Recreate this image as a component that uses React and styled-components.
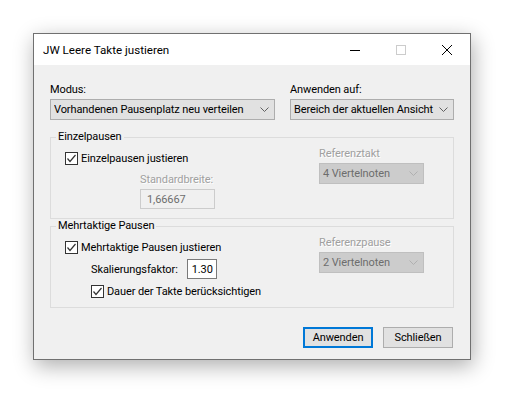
import styled, { createGlobalStyle } from "styled-components";

const GlobalStyle = createGlobalStyle`
  html, body {
    margin: 0;
    background: #ffffff;
  }
  body {
    font-family: Roboto, "Noto Sans", sans-serif;
    font-size: 11px;
    letter-spacing: -0.1px;
    color: #000;
  }
`;

const Page = styled.div`
  width: 524px;
  height: 399px;
  padding: 33px 0 0 33px;
  box-sizing: border-box;
  background: #fff;
`;

const Window = styled.div`
  width: 438px;
  box-sizing: border-box;
  border: 1px solid #707070;
  background: #f0f0f0;
  box-shadow: 2px 6px 20px rgba(0, 0, 0, 0.32);
`;

const TitleBar = styled.div`
  height: 31px;
  background: #fff;
  display: flex;
  align-items: center;
`;

const Title = styled.div`
  flex: 1;
  padding-left: 9px;
  font-size: 11.6px;
  letter-spacing: 0;
  line-height: 16px;
`;

const CaptionButton = styled.div`
  width: 46px;
  height: 31px;
  display: flex;
  align-items: center;
  justify-content: center;
`;

const Body = styled.div`
  padding: 18px 16px 11px 16px;
`;

const TopRow = styled.div`
  display: flex;
  gap: 15px;
`;

const Column = styled.div`
  display: flex;
  flex-direction: column;
  width: ${(p) => p.$w}px;
`;

const Label = styled.div`
  line-height: 14px;
  height: 14px;
  margin-bottom: 2px;
  white-space: nowrap;
  color: ${(p) => (p.$disabled ? "#a0a0a0" : "#000")};
  text-shadow: ${(p) => (p.$disabled ? "1px 1px 0 #fff" : "none")};
`;

const Combo = styled.div`
  height: 21px;
  box-sizing: border-box;
  border: 1px solid ${(p) => (p.$disabled ? "#bfbfbf" : "#adadad")};
  background: ${(p) => (p.$disabled ? "#cccccc" : "#e1e1e1")};
  color: ${(p) => (p.$disabled ? "#6d6d6d" : "#000")};
  display: flex;
  align-items: center;
  gap: 2px;
  padding: 0 5px 0 3px;
  white-space: nowrap;
  span {
    flex: 1;
    overflow: hidden;
  }
  svg {
    flex-shrink: 0;
  }
`;

const Group = styled.div`
  position: relative;
  height: 82px;
  box-sizing: border-box;
  border: 1px solid #dcdcdc;
  margin-top: ${(p) => p.$top}px;
  padding: 9px 29px 0 14px;
  display: flex;
  justify-content: space-between;
`;

const Legend = styled.div`
  position: absolute;
  top: -8px;
  left: 5px;
  padding: 0 2px;
  background: #f0f0f0;
  line-height: 14px;
`;

const LeftCol = styled.div`
  display: flex;
  flex-direction: column;
  padding-top: 5px;
`;

const CheckRow = styled.label`
  display: flex;
  align-items: center;
  gap: 3px;
  height: 13px;
  line-height: 13px;
  margin-left: ${(p) => p.$indent || 0}px;
  margin-top: ${(p) => p.$top || 0}px;
  white-space: nowrap;
`;

const Box = styled.span`
  width: 13px;
  height: 13px;
  box-sizing: border-box;
  border: 1px solid #333;
  background: #fff;
  display: flex;
  align-items: center;
  justify-content: center;
`;

const SubBlock = styled.div`
  margin-left: ${(p) => p.$indent}px;
  margin-top: ${(p) => p.$top}px;
  display: flex;
  flex-direction: ${(p) => (p.$row ? "row" : "column")};
  align-items: ${(p) => (p.$row ? "center" : "stretch")};
  gap: ${(p) => (p.$row ? "9px" : "0")};
`;

const Field = styled.div`
  width: ${(p) => p.$w}px;
  height: 20px;
  box-sizing: border-box;
  border: 1px solid ${(p) => (p.$disabled ? "#cccccc" : "#7a7a7a")};
  background: ${(p) => (p.$disabled ? "#f0f0f0" : "#fff")};
  color: ${(p) => (p.$disabled ? "#6d6d6d" : "#000")};
  display: flex;
  align-items: center;
  justify-content: ${(p) => (p.$right ? "flex-end" : "flex-start")};
  padding: 0 3px 0 6px;
`;

const Footer = styled.div`
  display: flex;
  justify-content: flex-end;
  gap: 10px;
  margin-top: 19px;
  padding-right: 1px;
`;

const Button = styled.div`
  width: 70px;
  height: 21px;
  box-sizing: border-box;
  border: ${(p) => (p.$default ? "2px solid #0078d7" : "1px solid #adadad")};
  background: #e1e1e1;
  display: flex;
  align-items: center;
  justify-content: center;
`;

const Chevron = ({ color }) => (
  <svg width="9" height="5" viewBox="0 0 9 5">
    <path d="M0.5 0.5 L4.5 4.5 L8.5 0.5" fill="none" stroke={color} strokeWidth="1" />
  </svg>
);

const Check = () => (
  <Box>
    <svg width="11" height="11" viewBox="0 0 11 11">
      <path d="M1.5 5.5 L4 8.5 L9.5 2" fill="none" stroke="#333" strokeWidth="1.2" />
    </svg>
  </Box>
);

function CheckItem({ children, indent, top }) {
  return (
    <CheckRow $indent={indent} $top={top}>
      <Check />
      {children}
    </CheckRow>
  );
}

export default function App() {
  return (
    <Page>
      <GlobalStyle />
      <Window>
        <TitleBar>
          <Title>JW Leere Takte justieren</Title>
          <CaptionButton>
            <svg width="10" height="10" viewBox="0 0 10 10">
              <path d="M0 5.5 H10" stroke="#000" strokeWidth="1" />
            </svg>
          </CaptionButton>
          <CaptionButton>
            <svg width="10" height="10" viewBox="0 0 10 10">
              <rect x="0.5" y="0.5" width="9" height="9" fill="none" stroke="#cccccc" />
            </svg>
          </CaptionButton>
          <CaptionButton>
            <svg width="10" height="10" viewBox="0 0 10 10">
              <path d="M0 0 L10 10 M10 0 L0 10" stroke="#000" strokeWidth="1" />
            </svg>
          </CaptionButton>
        </TitleBar>
        <Body>
          <TopRow>
            <Column $w={225}>
              <Label>Modus:</Label>
              <Combo>
                <span>Vorhandenen Pausenplatz neu verteilen</span>
                <Chevron color="#606060" />
              </Combo>
            </Column>
            <Column $w={164}>
              <Label>Anwenden auf:</Label>
              <Combo>
                <span>Bereich der aktuellen Ansicht</span>
                <Chevron color="#606060" />
              </Combo>
            </Column>
          </TopRow>

          <Group $top={17}>
            <Legend>Einzelpausen</Legend>
            <LeftCol>
              <CheckItem>Einzelpausen justieren</CheckItem>
              <SubBlock $indent={75} $top={8}>
                <Label $disabled>Standardbreite:</Label>
                <Field $w={75} $disabled>
                  1,66667
                </Field>
              </SubBlock>
            </LeftCol>
            <Column $w={105}>
              <Label $disabled>Referenztakt</Label>
              <Combo $disabled>
                <span>4 Viertelnoten</span>
                <Chevron color="#b0b0b0" />
              </Combo>
            </Column>
          </Group>

          <Group $top={7}>
            <Legend>Mehrtaktige Pausen</Legend>
            <LeftCol>
              <CheckItem>Mehrtaktige Pausen justieren</CheckItem>
              <SubBlock $indent={26} $top={5} $row>
                <span>Skalierungsfaktor:</span>
                <Field $w={30} $right>
                  1.30
                </Field>
              </SubBlock>
              <CheckItem indent={26} top={6}>
                Dauer der Takte berücksichtigen
              </CheckItem>
            </LeftCol>
            <Column $w={105}>
              <Label $disabled>Referenzpause</Label>
              <Combo $disabled>
                <span>2 Viertelnoten</span>
                <Chevron color="#b0b0b0" />
              </Combo>
            </Column>
          </Group>

          <Footer>
            <Button $default>Anwenden</Button>
            <Button>Schließen</Button>
          </Footer>
        </Body>
      </Window>
    </Page>
  );
}
